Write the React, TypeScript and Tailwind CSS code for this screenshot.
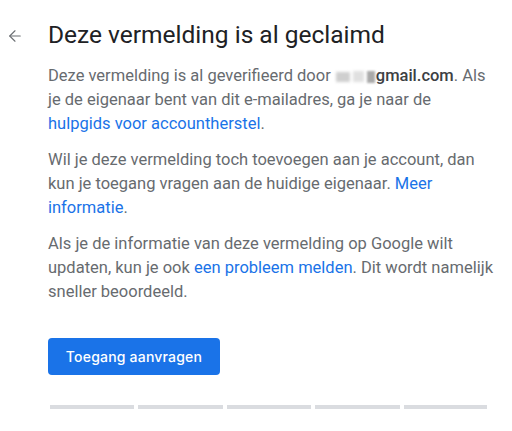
import { ArrowLeft } from "lucide-react"

export default function App() {
  return (
    <main className="min-h-screen bg-white font-['Roboto',sans-serif]">
      <div className="flex items-start pt-[20px]">
        <div className="w-[48px] pl-[6px] pt-[7px]">
          <ArrowLeft className="w-[18px] h-[18px] text-[#6b6f73]" strokeWidth={1.5} />
        </div>
        <h1 className="text-[24.5px] leading-[30px] text-[#202124]">Deze vermelding is al geclaimd</h1>
      </div>

      <div className="pl-[48px] pr-[16px] pt-[14px] text-[16.5px] leading-[24px] text-[#676b6f]">
        <p>
          Deze vermelding is al geverifieerd door
          <span className="inline-flex items-center gap-[3px] align-middle ml-[5px] mr-[1px]">
            <span className="inline-block w-[14px] h-[10px] bg-[#cfcfcf] blur-[1.5px]" />
            <span className="inline-block w-[11px] h-[11px] bg-[#e0e0e0] blur-[1.5px]" />
            <span className="inline-block w-[8px] h-[12px] bg-[#a9a9a9] blur-[1px]" />
          </span>
          <span className="font-medium text-[#3c4043]">gmail.com</span>. Als je de eigenaar bent van dit e-mailadres, ga je naar de{" "}
          <a className="text-[#1a73e8]">hulpgids voor accountherstel</a>.
        </p>
        <p className="mt-[12px]">
          Wil je deze vermelding toch toevoegen aan je account, dan kun je toegang vragen aan de huidige eigenaar.{" "}
          <a className="text-[#1a73e8]">Meer informatie</a>.
        </p>
        <p className="mt-[12px]">
          Als je de informatie van deze vermelding op Google wilt updaten, kun je ook{" "}
          <a className="text-[#1a73e8]">een probleem melden</a>. Dit wordt namelijk sneller beoordeeld.
        </p>

        <button className="mt-[34px] h-[37px] w-[172px] rounded-[4px] bg-[#1a73e8] text-white text-[14px] font-medium font-['Inter',sans-serif] tracking-[0.2px]">
          Toegang aanvragen
        </button>
      </div>

      <div className="flex gap-[4px] pl-[50px] pt-[30px]">
        <div className="w-[84px] h-[4px] bg-[#dadce0]" />
        <div className="w-[85px] h-[4px] bg-[#dadce0]" />
        <div className="w-[84px] h-[4px] bg-[#dadce0]" />
        <div className="w-[85px] h-[4px] bg-[#dadce0]" />
        <div className="w-[83px] h-[4px] bg-[#dadce0]" />
      </div>
    </main>
  )
}
